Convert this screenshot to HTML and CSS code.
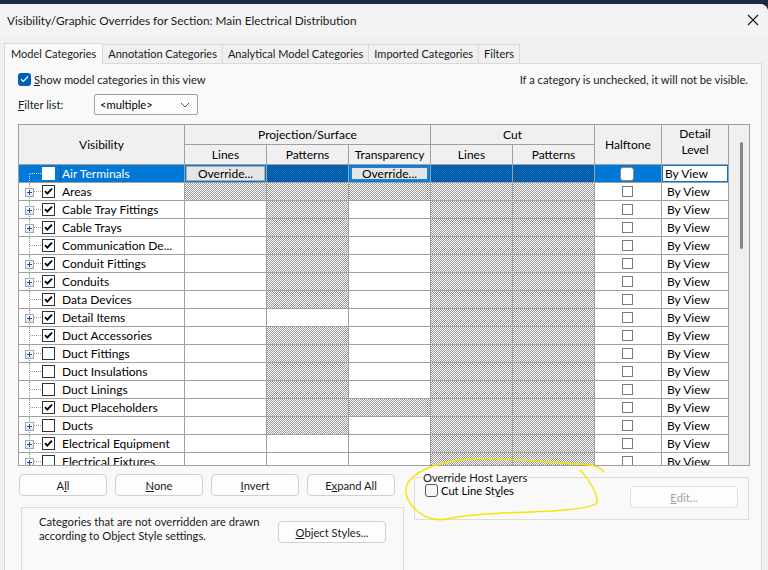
FILE: index.html
```html
<!DOCTYPE html>
<html>
<head>
<meta charset="utf-8">
<link rel="stylesheet" href="styles.css">
</head>
<body>
<div class="topstrip"></div>
<div class="window">
  <div class="titlebar">
    <span class="title">Visibility/Graphic Overrides for Section: Main Electrical Distribution</span>
    <svg class="close" width="12" height="12" viewBox="0 0 12 12"><path d="M1 1L11 11M11 1L1 11" stroke="#1a1a1a" stroke-width="1.1" fill="none"/></svg>
  </div>
  <div class="tabs">
    <div class="tab active">Model Categories</div>
    <div class="tab">Annotation Categories</div>
    <div class="tab">Analytical Model Categories</div>
    <div class="tab">Imported Categories</div>
    <div class="tab">Filters</div>
  </div>
  <div class="panel">
    <div class="toprow">
      <label class="showcat"><span class="bluecheck"><svg width="9" height="8" viewBox="0 0 9 8"><path d="M1 4.2L3.4 6.5L8 1.5" stroke="#fff" stroke-width="1.2" fill="none"/></svg></span><span><u>S</u>how model categories in this view</span></label>
      <span class="hint">If a category is unchecked, it will not be visible.</span>
    </div>
    <div class="filterrow">
      <span class="flabel"><u>F</u>ilter list:</span>
      <div class="select"><span>&lt;multiple&gt;</span><svg width="10" height="6" viewBox="0 0 10 6"><path d="M1 1L5 5L9 1" stroke="#555" stroke-width="1" fill="none"/></svg></div>
    </div>
    <div class="gridbox">
      <div class="grid">
        <div class="hc span2">Visibility</div>
        <div class="hc span3">Projection/Surface</div>
        <div class="hc span2c">Cut</div>
        <div class="hc span2">Halftone</div>
        <div class="hc span2 two">Detail<br>Level</div>
        <div class="hc">Lines</div>
        <div class="hc">Patterns</div>
        <div class="hc">Transparency</div>
        <div class="hc">Lines</div>
        <div class="hc">Patterns</div>

        <!-- row 0 selected -->
        <div class="c vis sel"><span class="tree first"></span><span class="cb selcb"></span><span class="name focus">Air Terminals</span></div>
        <div class="c sel"><span class="ovr">Override...</span></div>
        <div class="c bh"></div>
        <div class="c sel"><span class="ovr focusbtn">Override...</span></div>
        <div class="c bh"></div>
        <div class="c bh"></div>
        <div class="c sel ht"><span class="hcb selh"></span></div>
        <div class="c sel dl"><span class="dlbox">By View</span></div>

        <div class="c vis"><span class="tree"><span class="plus"></span></span><span class="cb on"></span><span class="name">Areas</span></div>
        <div class="c h"></div><div class="c h"></div><div class="c h"></div><div class="c h"></div><div class="c h"></div>
        <div class="c ht"><span class="hcb"></span></div><div class="c dl">By View</div>

        <div class="c vis"><span class="tree"><span class="plus"></span></span><span class="cb on"></span><span class="name">Cable Tray Fittings</span></div>
        <div class="c"></div><div class="c h"></div><div class="c"></div><div class="c h"></div><div class="c h"></div>
        <div class="c ht"><span class="hcb"></span></div><div class="c dl">By View</div>

        <div class="c vis"><span class="tree"><span class="plus"></span></span><span class="cb on"></span><span class="name">Cable Trays</span></div>
        <div class="c"></div><div class="c h"></div><div class="c"></div><div class="c h"></div><div class="c h"></div>
        <div class="c ht"><span class="hcb"></span></div><div class="c dl">By View</div>

        <div class="c vis"><span class="tree"></span><span class="cb on"></span><span class="name">Communication De...</span></div>
        <div class="c"></div><div class="c h"></div><div class="c"></div><div class="c h"></div><div class="c h"></div>
        <div class="c ht"><span class="hcb"></span></div><div class="c dl">By View</div>

        <div class="c vis"><span class="tree"><span class="plus"></span></span><span class="cb on"></span><span class="name">Conduit Fittings</span></div>
        <div class="c"></div><div class="c h"></div><div class="c"></div><div class="c h"></div><div class="c h"></div>
        <div class="c ht"><span class="hcb"></span></div><div class="c dl">By View</div>

        <div class="c vis"><span class="tree"><span class="plus"></span></span><span class="cb on"></span><span class="name">Conduits</span></div>
        <div class="c"></div><div class="c h"></div><div class="c"></div><div class="c h"></div><div class="c h"></div>
        <div class="c ht"><span class="hcb"></span></div><div class="c dl">By View</div>

        <div class="c vis"><span class="tree"></span><span class="cb on"></span><span class="name">Data Devices</span></div>
        <div class="c"></div><div class="c h"></div><div class="c"></div><div class="c h"></div><div class="c h"></div>
        <div class="c ht"><span class="hcb"></span></div><div class="c dl">By View</div>

        <div class="c vis"><span class="tree"><span class="plus"></span></span><span class="cb on"></span><span class="name">Detail Items</span></div>
        <div class="c"></div><div class="c"></div><div class="c"></div><div class="c h"></div><div class="c h"></div>
        <div class="c ht"><span class="hcb"></span></div><div class="c dl">By View</div>

        <div class="c vis"><span class="tree"></span><span class="cb on"></span><span class="name">Duct Accessories</span></div>
        <div class="c"></div><div class="c h"></div><div class="c"></div><div class="c h"></div><div class="c h"></div>
        <div class="c ht"><span class="hcb"></span></div><div class="c dl">By View</div>

        <div class="c vis"><span class="tree"><span class="plus"></span></span><span class="cb"></span><span class="name">Duct Fittings</span></div>
        <div class="c"></div><div class="c h"></div><div class="c"></div><div class="c h"></div><div class="c h"></div>
        <div class="c ht"><span class="hcb"></span></div><div class="c dl">By View</div>

        <div class="c vis"><span class="tree"></span><span class="cb"></span><span class="name">Duct Insulations</span></div>
        <div class="c"></div><div class="c h"></div><div class="c"></div><div class="c h"></div><div class="c h"></div>
        <div class="c ht"><span class="hcb"></span></div><div class="c dl">By View</div>

        <div class="c vis"><span class="tree"></span><span class="cb"></span><span class="name">Duct Linings</span></div>
        <div class="c"></div><div class="c h"></div><div class="c"></div><div class="c h"></div><div class="c h"></div>
        <div class="c ht"><span class="hcb"></span></div><div class="c dl">By View</div>

        <div class="c vis"><span class="tree"></span><span class="cb on"></span><span class="name">Duct Placeholders</span></div>
        <div class="c"></div><div class="c h"></div><div class="c h"></div><div class="c h"></div><div class="c h"></div>
        <div class="c ht"><span class="hcb"></span></div><div class="c dl">By View</div>

        <div class="c vis"><span class="tree"><span class="plus"></span></span><span class="cb"></span><span class="name">Ducts</span></div>
        <div class="c"></div><div class="c h"></div><div class="c"></div><div class="c h"></div><div class="c h"></div>
        <div class="c ht"><span class="hcb"></span></div><div class="c dl">By View</div>

        <div class="c vis"><span class="tree"><span class="plus"></span></span><span class="cb on"></span><span class="name">Electrical Equipment</span></div>
        <div class="c"></div><div class="c"></div><div class="c"></div><div class="c h"></div><div class="c h"></div>
        <div class="c ht"><span class="hcb"></span></div><div class="c dl">By View</div>

        <div class="c vis"><span class="tree"><span class="plus"></span></span><span class="cb"></span><span class="name">Electrical Fixtures</span></div>
        <div class="c"></div><div class="c"></div><div class="c"></div><div class="c h"></div><div class="c h"></div>
        <div class="c ht"><span class="hcb"></span></div><div class="c dl">By View</div>
      </div>
      <div class="vscroll"><div class="thumb"></div></div>
    </div>
    <div class="bottom">
      <div class="leftcol">
        <div class="btnrow">
          <div class="btn">A<u>l</u>l</div>
          <div class="btn"><u>N</u>one</div>
          <div class="btn"><u>I</u>nvert</div>
          <div class="btn">E<u>x</u>pand All</div>
        </div>
        <div class="infobox">
          <div class="infotext">Categories that are not overridden are drawn<br>according to Object Style settings.</div>
          <div class="btn objbtn"><u>O</u>bject Styles...</div>
        </div>
      </div>
      <div class="rightcol">
        <fieldset class="hostgrp">
          <legend>Override Host Layers</legend>
          <div class="hostrow">
            <label class="cutline"><span class="roundcb"></span><span>Cut Line St<u>y</u>les</span></label>
            <div class="btn disabled"><u>E</u>dit...</div>
          </div>
        </fieldset>
        <div class="lowerbox"></div>
      </div>
    </div>
  </div>
</div>
<svg class="annot" width="768" height="570" viewBox="0 0 768 570"><path d="M409 481 C420 468 440 462 470 459 C500 457 540 462 580 464 C595 465 602 468 604 472 M580 470 C590 480 598 495 597 503 C590 509 560 511 530 512 C500 513 470 514 447 519 C432 522 418 515 410 503 C405 495 404 488 409 481" stroke="#f4e600" stroke-width="1.4" fill="none" stroke-linecap="round"/></svg>
</body>
</html>
```
FILE: styles.css
```css
* { box-sizing: border-box; }
html, body { margin: 0; padding: 0; }
body {
  width: 768px; height: 570px; overflow: hidden;
  background: #1d2c46;
  font-family: "Lato", "Noto Sans", sans-serif;
  font-size: 11.2px; color: #000;
}
.topstrip { height: 4px; }
.window {
  height: 566px;
  background: #f0f0f0;
  border-top-right-radius: 8px;
  overflow: hidden;
}
.titlebar {
  height: 32px;
  background: #f3f3f3;
  display: flex; align-items: center; justify-content: space-between;
  padding: 0 8px 0 7px;
}
.title { font-size: 11.8px; color: #1a1a1a; padding-top: 1px; }
.close { margin-right: 1px; }

.tabs { display: flex; align-items: flex-end; padding: 6px 0 0 4px; height: 27px; font-size: 11px; }
.tab {
  height: 19px; padding: 0 5px; line-height: 18px;
  border: 1px solid #dadada; border-bottom: none; margin-left: -1px;
  background: #f0f0f0; color: #1a1a1a;
}
.tab.active { height: 21px; background: #f9f9f9; margin-left: 0; padding: 0 6px; line-height: 20px; position: relative; z-index: 1; margin-bottom: -1px; }

.panel {
  margin-left: 4px; width: 758px; height: 520px;
  background: #f9f9f9; border: 1px solid #dadada;
  padding: 7px 11px 0 13px;
}
.toprow { display: flex; justify-content: space-between; align-items: center; height: 16px; }
.showcat { display: flex; align-items: center; gap: 3px; color: #1a1a1a; }
.bluecheck {
  width: 13px; height: 13px; border-radius: 3px; background: #005fb8;
  display: flex; align-items: center; justify-content: center;
}
.hint { color: #1a1a1a; padding-right: 2px; }
.filterrow { display: flex; align-items: center; margin-top: 7px; height: 21px; }
.flabel { width: 76px; color: #1a1a1a; }
.select {
  width: 104px; height: 21px; border: 1px solid #a0a0a0; border-radius: 2px; background: #fdfdfd;
  display: flex; align-items: center; justify-content: space-between; padding: 0 7px 0 5px;
}

.gridbox {
  margin-top: 9px; width: 732px; height: 342px;
  border: 1px solid #a0a0a0;
  display: flex; overflow: hidden; background: #fff;
  font-size: 12px;
}
.grid {
  display: grid;
  grid-template-columns: 166px 82px 82px 82px 82px 82px 67px 67px;
  grid-template-rows: 20px 20px;
  grid-auto-rows: 18px;
  width: 710px; flex: none;
}
.hc {
  background: #f0f0f0; border-right: 1px solid #a0a0a0; border-bottom: 1px solid #a0a0a0;
  display: flex; align-items: center; justify-content: center; text-align: center;
  line-height: 16px;
}
.hc.two { padding-bottom: 6px; }
.span2 { grid-row: span 2; }
.span3 { grid-column: span 3; }
.span2c { grid-column: span 2; }
.c {
  border-right: 1px solid #a0a0a0; border-bottom: 1px solid #a0a0a0;
  background: #fff; display: flex; align-items: center; white-space: nowrap; overflow: hidden;
}
.h {
  background-color: #fff;
  background-image: repeating-conic-gradient(#989898 0 25%, #ffffff 0 50%);
  background-size: 2px 2px;
}
.sel { background: #0078d7; color: #fff; }
.bh {
  background-image: repeating-conic-gradient(#0a4a85 0 25%, #0078d7 0 50%);
  background-size: 2px 2px;
}
.vis { position: relative; }
.tree { width: 22px; height: 100%; position: relative; flex: none; display: flex; align-items: center; }
.tree::before {
  content: ""; position: absolute; left: 10px; top: 0; bottom: -1px;
  border-left: 1px dotted #9a9a9a;
}
.tree.first::before { top: 9px; }
.tree::after {
  content: ""; position: absolute; left: 11px; top: 8px; width: 11px;
  border-top: 1px dotted #9a9a9a;
}
.sel .tree::before, .sel .tree::after { border-color: #d0e4f5; }
.plus {
  width: 9px; height: 9px; margin-left: 6px; margin-top: 2px;
  border: 1px solid #9aa6bd;
  position: relative; z-index: 1;
  background-image:
    linear-gradient(#2a4a8a, #2a4a8a),
    linear-gradient(#2a4a8a, #2a4a8a),
    linear-gradient(#ffffff, #e4e8ef);
  background-size: 5px 1px, 1px 5px, 100% 100%;
  background-position: center, center, 0 0;
  background-repeat: no-repeat;
}
.cb {
  width: 13px; height: 13px; margin-left: 1px; flex: none;
  border: 1px solid #333; background: #fff;
}
.cb.on {
  background-image: url("data:image/svg+xml;utf8,<svg xmlns='http://www.w3.org/2000/svg' width='11' height='11' viewBox='0 0 11 11'><path d='M2 5.2L4.3 7.6L9 2.6' stroke='%23000' stroke-width='1.8' fill='none'/></svg>");
  background-repeat: no-repeat;
}
.selcb { border-color: #fff; }
.name { margin-left: 7px; }
.focus { height: 100%; display: flex; align-items: center; flex: 1; border-left: 1px dotted #333; margin-left: 5px; padding-left: 1px; }
.ovr {
  margin: 1px; flex: 1; height: 15px; background: #e5e5e5; border: 1px solid #adadad; color: #000;
  display: flex; align-items: center; justify-content: center; line-height: 13px;
}
.focusbtn { border: 2px solid #1a7fd6; }
.ht { justify-content: center; }
.hcb { width: 11px; height: 11px; border: 1px solid #7a7a7a; background: #fff; margin-left: -2px; }
.selh { width: 14px; height: 14px; border-radius: 3px; border: 1px solid #8a8a8a; }
.dl { padding-left: 5px; }
.dl.sel { padding-left: 1px; }
.dlbox { flex: 1; height: 15px; background: #fff; color: #000; margin-right: 1px; padding-left: 2px; line-height: 15px; }

.vscroll { flex: 1; background: #f0f0f0; position: relative; }
.thumb { width: 3px; height: 107px; margin: 17px 0 0 11px; background: #868686; border-radius: 2px; }

.bottom { display: flex; margin-top: 8px; }
.leftcol { width: 386px; padding-left: 1px; }
.btnrow { display: flex; gap: 8px; }
.btn {
  width: 88px; height: 22px; border: 1px solid #d0d0d0; border-radius: 4px; background: #fdfdfd;
  display: flex; align-items: center; justify-content: center; color: #1a1a1a;
}
.infobox {
  margin-top: 11px; margin-left: 2px; width: 383px; height: 70px;
  border: 1px solid #dcdcdc; border-bottom: none;
  display: flex; padding: 7px 0 0 17px;
}
.infotext { width: 239px; line-height: 14px; color: #1a1a1a; }
.objbtn { width: 108px; margin-top: 6px; }
.rightcol { margin-left: 10px; width: 335px; }
.hostgrp {
  margin: 0; padding: 0 10px 0 10px; width: 335px; height: 49px;
  border: 1px solid #dcdcdc; margin-top: -3px;
}
.hostgrp legend { padding: 0 1px; margin-left: -3px; color: #1a1a1a; line-height: 13px; }
.hostrow { display: flex; justify-content: space-between; align-items: flex-start; margin-top: -1px; }
.cutline { display: flex; align-items: center; gap: 3px; margin-top: 1px; }
.roundcb { width: 13px; height: 13px; border: 1px solid #555; border-radius: 3px; background: #f6f6f6; }
.btn.disabled { width: 108px; color: #a0a0a0; border-color: #e0e0e0; margin-top: 3px; }
.lowerbox { height: 45px; margin-top: -14px; }

.annot { position: absolute; left: 0; top: 0; pointer-events: none; }
```
